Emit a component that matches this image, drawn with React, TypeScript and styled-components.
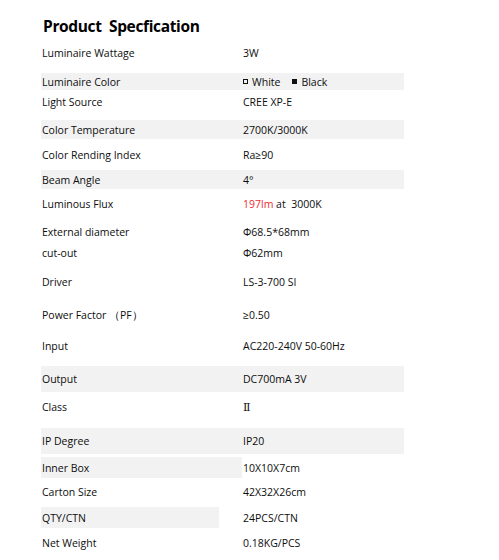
import React, { FC } from "react";
import styled, { createGlobalStyle } from "styled-components";

type SpecRow = {
  label: string;
  value: React.ReactNode;
  gap: number;
  height: number;
  shade?: number;
};

const GlobalStyle = createGlobalStyle`
  html, body {
    margin: 0;
    padding: 0;
    background: #ffffff;
  }
  body {
    font-family: "Open Sans", "Noto Sans", sans-serif;
    color: #0d0d0d;
  }
`;

const Root = styled.div`
  width: 499px;
  height: 560px;
  padding-left: 41px;
  box-sizing: border-box;
  overflow: hidden;
`;

const Title = styled.h1`
  margin: 0;
  padding: 14px 0 0 2px;
  height: 30px;
  font-size: 15.5px;
  font-weight: 700;
  letter-spacing: -0.35px;
  line-height: 24px;
  white-space: pre;
  color: #000000;
`;

const List = styled.div`
  display: flex;
  flex-direction: column;
`;

const Row = styled.div<{ $gap: number; $height: number }>`
  position: relative;
  display: grid;
  grid-template-columns: 201px 1fr;
  align-items: center;
  margin-top: ${(p) => p.$gap}px;
  height: ${(p) => p.$height}px;
  font-size: 10.5px;
`;

const Shade = styled.div<{ $width: number }>`
  position: absolute;
  left: 0;
  top: 0;
  bottom: 0;
  width: ${(p) => p.$width}px;
  background: #f2f2f2;
`;

const Label = styled.div`
  position: relative;
  padding-left: 1px;
  white-space: pre;
`;

const Value = styled.div`
  position: relative;
  display: flex;
  align-items: center;
  padding-left: 1px;
  white-space: pre;
`;

const Swatch = styled.span<{ $filled?: boolean; $space?: number }>`
  display: inline-block;
  width: 3px;
  height: 3px;
  margin-left: ${(p) => p.$space ?? 0}px;
  margin-right: 4px;
  border: 1px solid #111111;
  background: ${(p) => (p.$filled ? "#111111" : "transparent")};
`;

const Red = styled.span`
  color: #ee2a2e;
`;

const Roman = styled.span`
  font-family: "Liberation Serif", "DejaVu Serif", serif;
  font-size: 11px;
`;

const rows: SpecRow[] = [
  { label: "Luminaire Wattage", value: "3W", gap: 0, height: 18 },
  {
    label: "Luminaire Color",
    value: (
      <>
        <Swatch />
        White
        <Swatch $filled $space={12} />
        Black
      </>
    ),
    gap: 11,
    height: 17,
    shade: 363,
  },
  { label: "Light Source", value: "CREE XP-E", gap: 3, height: 18 },
  { label: "Color Temperature", value: "2700K/3000K", gap: 9, height: 19, shade: 363 },
  { label: "Color Rending Index", value: "Ra≥90", gap: 7, height: 18 },
  { label: "Beam Angle", value: "4°", gap: 6, height: 19, shade: 363 },
  {
    label: "Luminous Flux",
    value: (
      <>
        <Red>197lm</Red> at&nbsp; 3000K
      </>
    ),
    gap: 6,
    height: 18,
  },
  { label: "External diameter", value: "Φ68.5*68mm", gap: 10, height: 18 },
  { label: "cut-out", value: "Φ62mm", gap: 3, height: 18 },
  { label: "Driver", value: "LS-3-700 SI", gap: 11, height: 18 },
  { label: "Power Factor （PF）", value: "≥0.50", gap: 15, height: 18 },
  { label: "Input", value: "AC220-240V 50-60Hz", gap: 13, height: 18 },
  { label: "Output", value: "DC700mA 3V", gap: 11, height: 26, shade: 363 },
  { label: "Class", value: <Roman>Ⅱ</Roman>, gap: 6, height: 18 },
  { label: "IP Degree", value: "IP20", gap: 12, height: 26, shade: 363 },
  { label: "Inner Box", value: "10X10X7cm", gap: 3, height: 21, shade: 201 },
  { label: "Carton Size", value: "42X32X26cm", gap: 5, height: 18 },
  { label: "QTY/CTN", value: "24PCS/CTN", gap: 6, height: 21, shade: 178 },
  { label: "Net Weight", value: "0.18KG/PCS", gap: 6, height: 18 },
];

const App: FC = () => {
  return (
    <>
      <GlobalStyle />
      <Root>
        <Title>{"Product  Specfication"}</Title>
        <List>
          {rows.map((row) => (
            <Row key={row.label} $gap={row.gap} $height={row.height}>
              {row.shade && <Shade $width={row.shade} />}
              <Label>{row.label}</Label>
              <Value>{row.value}</Value>
            </Row>
          ))}
        </List>
      </Root>
    </>
  );
};

export default App;
